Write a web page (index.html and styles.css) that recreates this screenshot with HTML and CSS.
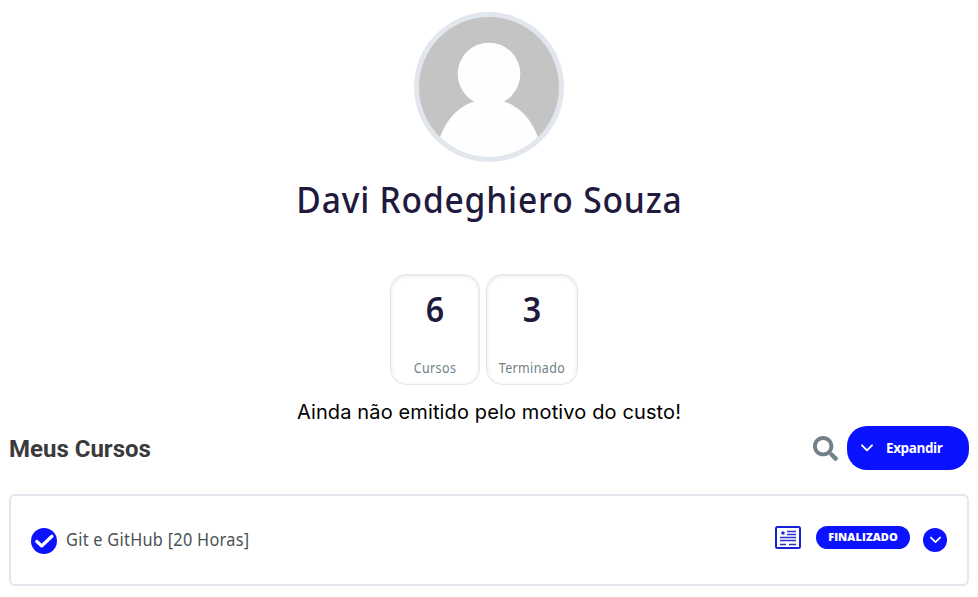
FILE: index.html
```html
<!DOCTYPE html>
<html lang="pt-BR">
<head>
<meta charset="utf-8">
<title>Meus Cursos</title>
<link rel="stylesheet" href="styles.css">
</head>
<body>
<main class="page">
  <section class="profile">
    <svg class="avatar" viewBox="0 0 150 150" aria-hidden="true">
      <defs><clipPath id="disc"><circle cx="75" cy="75" r="70"/></clipPath></defs>
      <circle cx="75" cy="75" r="75" fill="#e2e7ee"/>
      <g clip-path="url(#disc)">
        <rect width="150" height="150" fill="#c4c4c4"/>
        <circle cx="75" cy="62" r="31.3" fill="#fefefe"/>
        <path d="M24 132C29 112 42 95 60 89.500H90C108 95 121 112 126 132V150H24Z" fill="#fefefe"/>
      </g>
    </svg>
    <h1 class="name"><span>Davi Rodeghiero Souza</span></h1>
    <div class="stats">
      <div class="stat"><strong>6</strong><span>Cursos</span></div>
      <div class="stat stat-wide"><strong>3</strong><span>Terminado</span></div>
    </div>
    <p class="note"><span>Ainda não emitido pelo motivo do custo!</span></p>
  </section>
  <header class="bar">
    <h2 class="title"><span>Meus Cursos</span></h2>
    <svg class="search" viewBox="0 0 512 512" aria-hidden="true"><path fill="#728188" d="M505 442.700L405.300 343c-4.500-4.500-10.600-7-17-7H372c27.600-35.300 44-79.700 44-128C416 93.100 322.900 0 208 0S0 93.100 0 208s93.100 208 208 208c48.300 0 92.700-16.400 128-44v16.300c0 6.400 2.500 12.500 7 17l99.700 99.700c9.400 9.400 24.600 9.400 33.900 0l28.300-28.300c9.400-9.400 9.400-24.600.1-34zM208 336c-70.700 0-128-57.200-128-128 0-70.700 57.200-128 128-128 70.700 0 128 57.200 128 128 0 70.700-57.200 128-128 128z"/></svg>
    <button class="expand" type="button">
      <svg class="chevron" viewBox="0 0 12 8" aria-hidden="true"><path d="M1 1.300l5 5 5-5"/></svg>
      <span>Expandir</span>
    </button>
  </header>
  <article class="course">
    <svg class="check" viewBox="0 0 26 26" aria-hidden="true"><circle cx="13" cy="13" r="13" fill="#0a12ff"/><path d="M5.800 13.600l5 4.300 10.100-9.600" fill="none" stroke="#fff" stroke-width="3.300" stroke-linecap="round" stroke-linejoin="round"/></svg>
    <span class="course-name">Git e GitHub [20 Horas]</span>
    <svg class="certificate" viewBox="0 0 26 23" aria-hidden="true">
      <rect x="1" y="1" width="24" height="21" rx="1.500" fill="none" stroke="#171fdb" stroke-width="2"/>
      <path d="M12 5.500h9M12 8.500h9M5 11.500h16M5 14.500h16M5 18.500h6M14 18.500h7" stroke="#2930cf" stroke-width="1.300"/>
      <path d="M8 4.500l.7 1.500 1.700.2-1.200 1.100.3 1.700L8 8.200 6.500 9l.3-1.700-1.200-1.100 1.700-.2z" fill="#171fdb"/>
    </svg>
    <span class="badge">FINALIZADO</span>
    <button class="toggle" type="button" aria-label="Expandir curso"><svg viewBox="0 0 12 8" aria-hidden="true"><path d="M1 1.300l5 5 5-5"/></svg></button>
  </article>
</main>
</body>
</html>
```
FILE: styles.css
```css
* { box-sizing: border-box; }
body { margin: 0; background: #fff; font-family: "Noto Sans", sans-serif; }
.page { height: 597px; padding: 12px 9px 0; overflow: hidden; }
.profile { display: flex; flex-direction: column; align-items: center; }
.avatar { width: 150px; height: 150px; flex: none; }
.name { margin: 13px 0 0; height: 50px; line-height: 50px; font-size: 36px; font-weight: 500; letter-spacing: 0.85px; color: #211a3d; white-space: nowrap; transform: translateX(0.5px) scaleX(0.933); }
.stats { display: flex; gap: 6px; margin: 49px 10px 0 0; }
.stat { width: 90px; height: 111px; display: flex; flex-direction: column; align-items: center; border: 1px solid #e3e6ea; border-radius: 16px; box-shadow: inset 0 1px 4px #e2e4e9; }
.stat-wide { width: 92px; }
.stat strong { height: 40px; margin-top: 14px; line-height: 40px; font-size: 35px; font-weight: 600; color: #211a3d; transform: scaleX(0.92); }
.stat span { margin-top: 29px; line-height: 20px; font-size: 13.5px; letter-spacing: 0.4px; color: #728188; transform: scaleX(0.925); }
.note { margin: 13px 0 0; height: 28px; line-height: 28px; font-family: Inter, sans-serif; font-size: 20px; letter-spacing: 0.13px; color: #000; white-space: nowrap; }
.bar { display: flex; align-items: center; height: 44px; }
.title { margin: 2px auto 0 0; font: bold 24px/32px Roboto, sans-serif; color: #3a3a3a; }
.search { width: 25px; height: 25px; margin-right: 9px; }
.expand { display: flex; align-items: center; width: 122px; height: 44px; padding: 0 0 0 14px; border: 0; border-radius: 20px; background: #0a12ff; color: #fff; font: 700 13.5px/20px "Open Sans", sans-serif; letter-spacing: -0.4px; }
.chevron { width: 12px; height: 8px; margin-right: 13px; }
.chevron path, .toggle path { fill: none; stroke: #fff; stroke-width: 1.900; stroke-linecap: round; stroke-linejoin: round; }
.course { display: flex; align-items: center; height: 92px; margin-top: 24px; padding: 0 20px; border: 2px solid #e2e7ed; border-radius: 6px; }
.check { width: 26px; height: 26px; margin: 1px 9px 0 0; }
.course-name { font-size: 17.5px; letter-spacing: 0.3px; line-height: 24px; color: #495255; margin: -2px auto 0 0; white-space: nowrap; transform: scaleX(0.932); transform-origin: left; }
.certificate { width: 26px; height: 23px; margin: -5px 15px 0 0; }
.badge { width: 94px; height: 23px; margin: -5px 13px 0 0; border-radius: 12px; background: #0a12ff; color: #fff; font: 800 11px/22px "Open Sans", sans-serif; letter-spacing: 0.1px; text-align: center; }
.toggle { display: flex; align-items: center; justify-content: center; width: 24px; height: 24px; padding: 0; border: 0; border-radius: 50%; background: #0a12ff; }
.toggle svg { width: 11px; height: 8px; }
```
